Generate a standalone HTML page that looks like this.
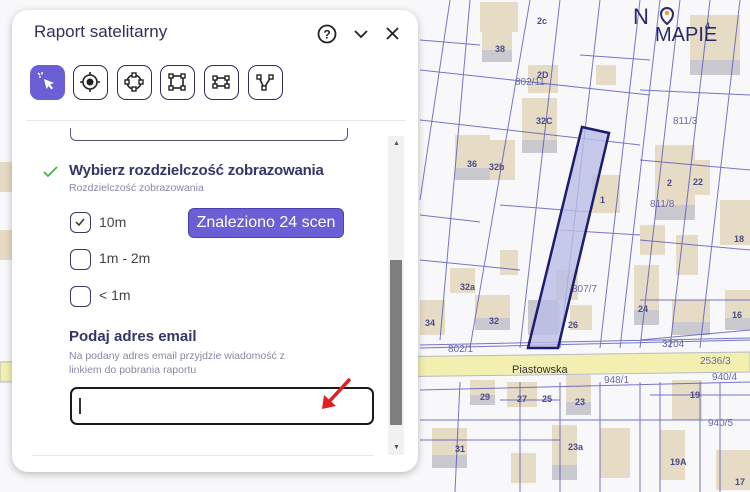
<!DOCTYPE html>
<html><head><meta charset="utf-8"><style>
body{margin:0;width:750px;height:492px;overflow:hidden;background:#f7f7f9;font-family:"Liberation Sans","DejaVu Sans",sans-serif;position:relative}
svg.map{position:absolute;left:0;top:0}
.panel{position:absolute;left:12px;top:10px;width:406px;height:462px;background:#fff;border-radius:16px;box-shadow:0 2px 8px rgba(0,0,0,.25)}
.t{position:absolute;white-space:nowrap}
.tb{position:absolute;top:55px;width:35px;height:35px;border:1.5px solid #2d2d55;border-radius:9px;box-sizing:border-box;background:#fff}
.cb{position:absolute;left:58px;width:21px;height:21px;border:1.5px solid #3a3a5a;border-radius:6px;box-sizing:border-box}
</style></head><body>
<svg class="map" width="750" height="492" viewBox="0 0 750 492">
<rect width="750" height="492" fill="#f8f8fa"/>
<g fill="#e6dbc4">
<rect x="480" y="2" width="38" height="30"/><rect x="482" y="22" width="30" height="40"/><rect x="522" y="98" width="35" height="55"/>
<rect x="455" y="135" width="35" height="45"/><rect x="485" y="140" width="30" height="40"/><rect x="596" y="65" width="20" height="20"/>
<rect x="528" y="65" width="30" height="28"/><rect x="592" y="175" width="28" height="38"/><rect x="655" y="145" width="40" height="75"/>
<rect x="685" y="160" width="25" height="35"/><rect x="720" y="200" width="30" height="45"/><rect x="640" y="225" width="25" height="30"/>
<rect x="676" y="235" width="22" height="40"/><rect x="634" y="265" width="25" height="60"/><rect x="672" y="300" width="38" height="35"/>
<rect x="725" y="290" width="25" height="40"/><rect x="500" y="250" width="18" height="25"/><rect x="450" y="268" width="25" height="25"/>
<rect x="475" y="295" width="35" height="35"/><rect x="420" y="300" width="25" height="35"/><rect x="556" y="270" width="22" height="30"/>
<rect x="536" y="303" width="24" height="30"/><rect x="570" y="305" width="22" height="25"/><rect x="0" y="162" width="12" height="30"/><rect x="0" y="230" width="12" height="30"/>
<rect x="470" y="380" width="25" height="25"/><rect x="507" y="382" width="30" height="25"/><rect x="566" y="375" width="25" height="40"/>
<rect x="432" y="428" width="35" height="40"/><rect x="552" y="425" width="25" height="55"/><rect x="600" y="428" width="30" height="50"/>
<rect x="511" y="453" width="25" height="30"/><rect x="672" y="380" width="30" height="40"/><rect x="660" y="430" width="25" height="50"/><rect x="716" y="450" width="34" height="40"/><rect x="690" y="15" width="50" height="60"/>
</g>
<g fill="#c9c9cf">
<rect x="482" y="50" width="30" height="12"/><rect x="522" y="140" width="35" height="13"/><rect x="455" y="168" width="35" height="12"/><rect x="655" y="205" width="40" height="15"/><rect x="634" y="310" width="25" height="15"/><rect x="672" y="322" width="38" height="13"/><rect x="475" y="318" width="35" height="12"/><rect x="432" y="455" width="35" height="13"/><rect x="552" y="465" width="25" height="15"/><rect x="690" y="60" width="50" height="15"/><rect x="528" y="300" width="30" height="35"/><rect x="725" y="318" width="25" height="12"/><rect x="470" y="395" width="25" height="10"/><rect x="566" y="402" width="25" height="13"/>
</g>
<path d="M0 362 L750 352 L750 372 L0 382Z" fill="#f2efb0" stroke="#b8b8c8" stroke-width="1"/>
<g stroke="#4a4ab8" stroke-width="1" fill="none" opacity=".75">
<path d="M420 348 L750 340 M420 390 L750 382 M420 345 L750 338 M450 0 L420 200 M470 0 L440 340 M530 0 L470 348 M560 0 L520 348 M600 0 L560 348 M640 0 L600 348 M660 0 L620 348 M680 0 L640 348 M710 0 L670 348 M740 0 L700 348 M420 120 L640 145 M420 260 L520 270 M560 230 L640 235 M420 70 L650 95 M640 90 L750 95 M640 160 L750 170 M640 300 L750 300 M640 340 L750 330 M460 382 L455 492 M520 382 L520 492 M560 382 L560 492 M600 382 L600 492 M640 382 L640 492 M660 382 L660 492 M700 382 L700 492 M720 382 L720 492 M420 420 L750 420 M500 400 L560 400 M420 215 L480 222 M500 205 L590 212 M580 55 L650 60 M420 40 L480 45 M640 240 L750 250 M650 395 L750 395 M420 440 L560 440"/>
</g>
<g fill="#4a4a8a" font-size="9" font-weight="bold"><text x="495" y="52">38</text><text x="537" y="78">2D</text><text x="537" y="24">2c</text><text x="536" y="124">32C</text><text x="467" y="167">36</text><text x="489" y="170">32b</text><text x="600" y="203">1</text><text x="667" y="186">2</text><text x="693" y="185">22</text><text x="734" y="242">18</text><text x="460" y="290">32a</text><text x="489" y="324">32</text><text x="425" y="326">34</text><text x="568" y="328">26</text><text x="638" y="312">24</text><text x="732" y="318">16</text><text x="480" y="400">29</text><text x="517" y="402">27</text><text x="542" y="402">25</text><text x="575" y="405">23</text><text x="690" y="398">19</text><text x="455" y="452">31</text><text x="568" y="450">23a</text><text x="670" y="465">19A</text><text x="735" y="485">17</text><text x="705" y="29">4</text></g>
<g fill="#6a6aa8" font-size="10"><text x="515" y="85">802/11</text><text x="673" y="124">811/3</text><text x="650" y="207">811/8</text><text x="572" y="292">807/7</text><text x="700" y="364">2536/3</text><text x="604" y="383">948/1</text><text x="712" y="380">940/4</text><text x="708" y="426">940/5</text><text x="448" y="352">802/1</text><text x="662" y="347">3204</text></g>
<text x="512" y="373" font-size="11" fill="#333">Piastowska</text>
<path d="M582 127 L609 133 L558 348 L528 348Z" fill="#b9bde6" fill-opacity=".8" stroke="#1d1d6e" stroke-width="2.5"/>
<g font-family="Liberation Sans,sans-serif" fill="#2a2a6a" font-size="22"><text x="633" y="24">N</text><text x="655" y="41" font-size="20">MAPIE</text></g>
<path d="M661 14 a6 6 0 1 1 12 0 q0 5 -6 10 q-6 -5 -6 -10z" fill="none" stroke="#2a2a6a" stroke-width="2"/><circle cx="667" cy="13" r="2.2" fill="#f0a030"/>
</svg>
<div class="panel">
<div class="t" style="left:22px;top:12px;font-size:17px;color:#30305a">Raport satelitarny</div>
<svg style="position:absolute;left:303px;top:13px" width="100" height="24"><circle cx="12" cy="11" r="8.5" fill="none" stroke="#222" stroke-width="1.8"/><text x="12" y="15.5" font-size="12" text-anchor="middle" fill="#222" font-weight="bold">?</text><path d="M40 8 L46 14 L52 8" stroke="#222" stroke-width="1.8" fill="none"/><path d="M72 5 L83 16 M83 5 L72 16" stroke="#222" stroke-width="1.8"/></svg>
<div class="tb" style="left:18px;background:#6a5fd4;border-color:#6a5fd4"><svg width="33" height="33"><path d="M13 13 L23 17 L19 18.5 L22 22 L20.5 23.5 L17.5 20 L15.5 23Z" fill="#fff"/><path d="M8 11 L10 11 M11 6 L11 8.5 M7 7 L9 9" stroke="#fff" stroke-width="1.5"/></svg></div>
<div class="tb" style="left:61px"><svg width="33" height="33"><circle cx="16" cy="16" r="7" fill="none" stroke="#222" stroke-width="1.6"/><circle cx="16" cy="16" r="3.5" fill="#222"/><path d="M16 6v3M16 23v3M6 16h3M23 16h3" stroke="#222" stroke-width="1.6"/></svg></div>
<div class="tb" style="left:105px"><svg width="33" height="33"><circle cx="16" cy="16" r="7" fill="none" stroke="#222" stroke-width="1.6"/><g fill="#fff" stroke="#222" stroke-width="1.4"><rect x="14" y="7" width="4" height="4"/><rect x="14" y="21" width="4" height="4"/><rect x="7" y="14" width="4" height="4"/><rect x="21" y="14" width="4" height="4"/></g></svg></div>
<div class="tb" style="left:148px"><svg width="33" height="33"><rect x="10" y="10" width="12" height="12" fill="none" stroke="#222" stroke-width="1.6"/><g fill="#fff" stroke="#222" stroke-width="1.4"><rect x="8" y="8" width="4" height="4"/><rect x="20" y="8" width="4" height="4"/><rect x="8" y="20" width="4" height="4"/><rect x="20" y="20" width="4" height="4"/></g></svg></div>
<div class="tb" style="left:192px"><svg width="33" height="33"><rect x="10" y="12" width="12" height="8" fill="none" stroke="#222" stroke-width="1.6"/><g fill="#fff" stroke="#222" stroke-width="1.4"><rect x="8" y="10" width="4" height="4"/><rect x="20" y="10" width="4" height="4"/><rect x="8" y="18" width="4" height="4"/><rect x="20" y="18" width="4" height="4"/></g></svg></div>
<div class="tb" style="left:236px"><svg width="33" height="33"><path d="M10 11 L15 22 L22 11" fill="none" stroke="#222" stroke-width="1.6"/><g fill="#fff" stroke="#222" stroke-width="1.4"><rect x="8" y="9" width="4" height="4"/><rect x="20" y="9" width="4" height="4"/><rect x="13" y="20" width="4" height="4"/></g></svg></div>
<div style="position:absolute;left:14px;top:110px;width:380px;height:1px;background:#e6e6ec"></div>
<div style="position:absolute;left:58px;top:118px;width:276px;height:12px;border:1.5px solid #555577;border-top:none;border-radius:0 0 6px 6px"></div>
<div style="position:absolute;left:376px;top:126px;width:16px;height:319px;background:#f1f1f1"></div>
<div style="position:absolute;left:378px;top:250px;width:12px;height:165px;background:#7f7f7f"></div>
<div class="t" style="left:381px;top:130px;font-size:7px;color:#555">▲</div>
<div class="t" style="left:381px;top:434px;font-size:7px;color:#555">▼</div>
<svg style="position:absolute;left:30px;top:155px" width="18" height="14"><path d="M2 7 L6 11 L15 2" stroke="#4caf50" stroke-width="1.8" fill="none"/></svg>
<div class="t" style="left:57px;top:152px;font-size:15px;color:#35356a;font-weight:bold;letter-spacing:-.2px">Wybierz rozdzielczość zobrazowania</div>
<div class="t" style="left:57px;top:172px;font-size:10.5px;color:#8886a6">Rozdzielczość zobrazowania</div>
<div class="cb" style="top:202px"><svg width="18" height="18"><path d="M5 9 L8 12 L13 6" stroke="#333" stroke-width="1.5" fill="none"/></svg></div>
<div class="t" style="left:87px;top:204px;font-size:14px;color:#444">10m</div>
<div style="position:absolute;left:176px;top:198px;width:156px;height:30px;background:#6a5fd4;border-radius:6px;border:1px solid #4a40b0;box-sizing:border-box;color:#fff;font-size:16px;line-height:28px;text-align:center">Znaleziono 24 scen</div>
<div class="cb" style="top:239px"></div>
<div class="t" style="left:87px;top:240px;font-size:14px;color:#444">1m - 2m</div>
<div class="cb" style="top:276px"></div>
<div class="t" style="left:87px;top:277px;font-size:14px;color:#444">&lt; 1m</div>
<div class="t" style="left:57px;top:318px;font-size:15px;color:#35356a;font-weight:bold">Podaj adres email</div>
<div class="t" style="left:57px;top:339px;font-size:10.5px;color:#8886a6;line-height:14px">Na podany adres email przyjdzie wiadomość z<br>linkiem do pobrania raportu</div>
<div style="position:absolute;left:58px;top:377px;width:304px;height:38px;border:2px solid #1a1a1a;border-radius:7px;box-sizing:border-box"></div>
<div style="position:absolute;left:67px;top:388px;width:1.5px;height:16px;background:#333"></div>
<svg style="position:absolute;left:300px;top:365px" width="50" height="40"><path d="M38 4 L14 30" stroke="#e02020" stroke-width="3.5"/><path d="M10 34 L12 20 L24 31Z" fill="#e02020"/></svg>
<div style="position:absolute;left:20px;top:445px;width:342px;height:1px;background:#e6e6ec"></div>
</div>
</body></html>
